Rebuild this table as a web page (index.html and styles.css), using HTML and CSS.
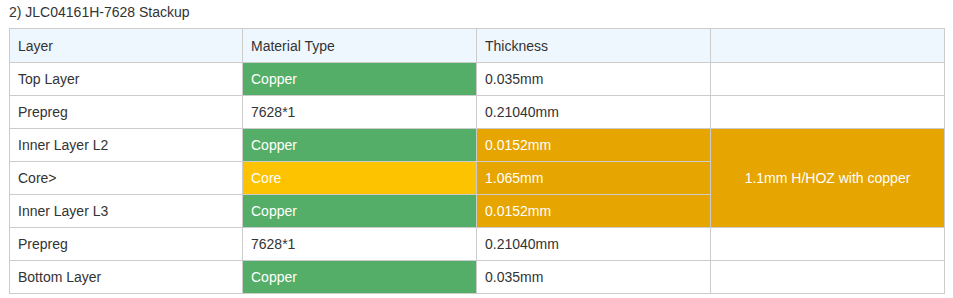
FILE: index.html
```html
<!DOCTYPE html>
<html>
<head>
<meta charset="utf-8">
<link rel="stylesheet" href="styles.css">
</head>
<body>
<div class="wrap">
  <div class="title">2) JLC04161H-7628 Stackup</div>
  <table class="stack">
    <colgroup>
      <col class="c1"><col class="c2"><col class="c2"><col class="c2">
    </colgroup>
    <thead>
      <tr><th>Layer</th><th>Material Type</th><th>Thickness</th><th></th></tr>
    </thead>
    <tbody>
      <tr><td>Top Layer</td><td class="cu">Copper</td><td>0.035mm</td><td></td></tr>
      <tr><td>Prepreg</td><td>7628*1</td><td>0.21040mm</td><td></td></tr>
      <tr><td>Inner Layer L2</td><td class="cu">Copper</td><td class="or">0.0152mm</td><td class="or center" rowspan="3">1.1mm H/HOZ with copper</td></tr>
      <tr><td>Core&gt;</td><td class="core">Core</td><td class="or">1.065mm</td></tr>
      <tr><td>Inner Layer L3</td><td class="cu">Copper</td><td class="or">0.0152mm</td></tr>
      <tr><td>Prepreg</td><td>7628*1</td><td>0.21040mm</td><td></td></tr>
      <tr><td>Bottom Layer</td><td class="cu">Copper</td><td>0.035mm</td><td></td></tr>
    </tbody>
  </table>
</div>
</body>
</html>
```
FILE: styles.css
```css
html, body {
  margin: 0;
  padding: 0;
  background: #fff;
}
body {
  font-family: "Liberation Sans", Arial, sans-serif;
  font-size: 14px;
  color: #333;
}
.wrap {
  padding: 0 8px 0 9px;
}
.title {
  padding-top: 2px;
  line-height: 20px;
  height: 20px;
  margin-bottom: 6px;
}
.stack {
  width: 936px;
  border-collapse: collapse;
  table-layout: fixed;
}
.stack .c1 {
  width: 233px;
}
.stack .c2 {
  width: 234px;
}
.stack th, .stack td {
  border: 1px solid #ccc;
  padding: 0 8px;
  text-align: left;
  vertical-align: middle;
  font-weight: normal;
  box-sizing: border-box;
}
.stack th {
  background: #eff7fe;
  height: 34px;
}
.stack td {
  height: 33px;
}
.stack .cu {
  background: #55ae67;
  color: #fff;
}
.stack .core {
  background: #fdc200;
  color: #fff;
}
.stack .or {
  background: #e6a500;
  color: #fff;
}
.stack .center {
  text-align: center;
}
```
